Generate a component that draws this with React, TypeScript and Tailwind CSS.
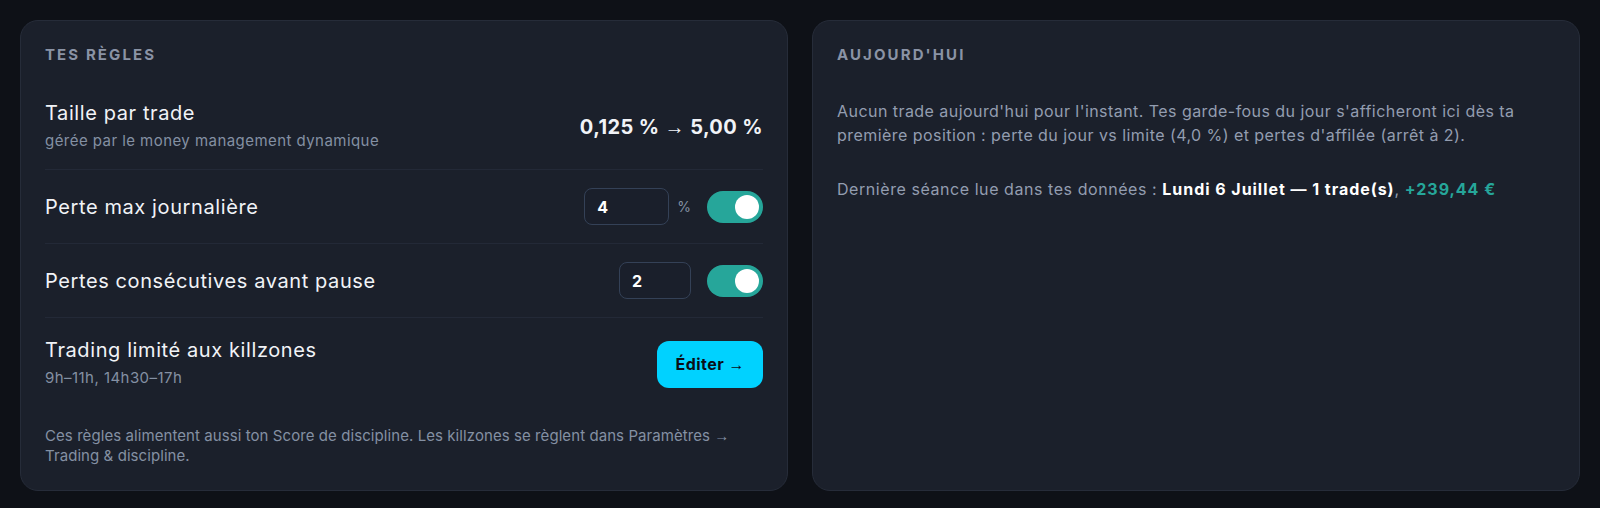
import { useState } from "react";

type RuleRowProps = {
  title: string;
  hint?: string;
  last?: boolean;
  children: React.ReactNode;
};

// thin arrow glyph, same one used across the labels
function Arrow() {
  return <span className="font-['Liberation_Sans',sans-serif] font-normal">→</span>;
}

function RuleRow({ title, hint, last, children }: RuleRowProps) {
  return (
    <div
      className={`flex items-center justify-between py-[18px] ${
        last ? "" : "border-b border-[#232937]"
      }`}
    >
      <div>
        <div className="text-[20px] leading-7 tracking-[0.03em] text-[#f1f3f7]">{title}</div>
        {hint && (
          <div className="mt-1 text-[15px] leading-5 tracking-[0.03em] text-[#8490a3]">{hint}</div>
        )}
      </div>
      <div className="flex items-center gap-4">{children}</div>
    </div>
  );
}

function Toggle({ on, onChange }: { on: boolean; onChange: (v: boolean) => void }) {
  return (
    <button
      type="button"
      onClick={() => onChange(!on)}
      className={`flex h-8 w-14 items-center rounded-full p-1 ${
        on ? "justify-end bg-[#26a69a]" : "justify-start bg-[#2f3646]"
      }`}
    >
      <span className="h-6 w-6 rounded-full bg-white" />
    </button>
  );
}

function NumberBox({ value, width }: { value: string; width: string }) {
  return (
    <input
      defaultValue={value}
      className={`${width} h-[37px] rounded-lg border border-[#344157] bg-[#1a1f2b] px-3 text-base font-bold text-white outline-none`}
    />
  );
}

export default function App() {
  const [dailyOn, setDailyOn] = useState(true);
  const [streakOn, setStreakOn] = useState(true);

  return (
    <div
      className="min-h-screen bg-[#0e1117] p-5"
      style={{ fontFamily: "Inter, 'Noto Sans', sans-serif" }}
    >
      <div className="grid grid-cols-2 items-stretch gap-6">
        {/* Rules */}
        <section className="rounded-[18px] border border-[#262c39] bg-[#1b202b] p-6">
          <h2 className="mb-4 text-[15px] leading-5 font-bold uppercase tracking-[0.14em] text-[#8a93a5]">
            Tes règles
          </h2>

          <RuleRow title="Taille par trade" hint="gérée par le money management dynamique">
            <span className="mt-1 text-[20px] font-bold tracking-[0.02em] text-[#f1f3f7]">
              0,125 % <Arrow /> 5,00 %
            </span>
          </RuleRow>

          <RuleRow title="Perte max journalière">
            <div className="flex items-center gap-2">
              <NumberBox value="4" width="w-[85px]" />
              <span className="text-sm text-[#8490a3]">%</span>
            </div>
            <Toggle on={dailyOn} onChange={setDailyOn} />
          </RuleRow>

          <RuleRow title="Pertes consécutives avant pause">
            <NumberBox value="2" width="w-[72px]" />
            <Toggle on={streakOn} onChange={setStreakOn} />
          </RuleRow>

          <RuleRow title="Trading limité aux killzones" hint="9h–11h, 14h30–17h" last>
            <button
              type="button"
              className="mt-1 h-[47px] rounded-xl bg-[#00d2ff] px-[18px] text-base font-bold tracking-[0.03em] text-[#0b0f17]"
            >
              Éditer <Arrow />
            </button>
          </RuleRow>

          <p className="mt-5 text-[15px] leading-5 tracking-[0.005em] text-[#8490a3]">
            Ces règles alimentent aussi ton Score de discipline. Les killzones se règlent dans
            Paramètres <Arrow /> Trading &amp; discipline.
          </p>
        </section>

        {/* Today */}
        <section className="rounded-[18px] border border-[#262c39] bg-[#1b202b] p-6">
          <h2 className="text-[15px] leading-5 font-bold uppercase tracking-[0.14em] text-[#8a93a5]">
            Aujourd'hui
          </h2>
          <p className="mt-[34px] text-base leading-6 tracking-[0.028em] text-[#939db0]">
            Aucun trade aujourd'hui pour l'instant. Tes garde-fous du jour s'afficheront ici dès ta
            première position : perte du jour vs limite (4,0 %) et pertes d'affilée (arrêt à 2).
          </p>
          <p className="mt-[30px] text-base leading-6 tracking-[0.035em] text-[#939db0]">
            Dernière séance lue dans tes données :{" "}
            <span className="font-bold tracking-[0.06em] text-white">Lundi 6 Juillet — 1 trade(s)</span>,{" "}
            <span className="font-bold tracking-[0.06em] text-[#26a69a]">+239,44 €</span>
          </p>
        </section>
      </div>
    </div>
  );
}
